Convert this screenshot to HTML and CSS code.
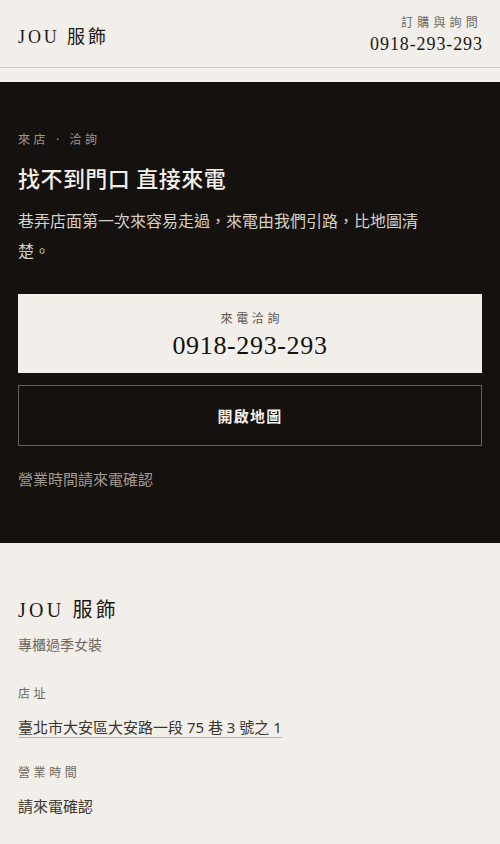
FILE: index.html
```html
<!DOCTYPE html>
<html lang="zh-Hant">
<head>
<meta charset="utf-8">
<title>JOU 服飾</title>
<link rel="stylesheet" href="styles.css">
</head>
<body>
<header class="topbar">
  <div class="brand">JOU 服飾</div>
  <div class="contact">
    <div class="contact-label">訂購與詢問</div>
    <div class="contact-phone">0918-293-293</div>
  </div>
</header>

<section class="visit">
  <div class="eyebrow">來店 · 洽詢</div>
  <h1 class="visit-title">找不到門口 直接來電</h1>
  <p class="visit-text">巷弄店面第一次來容易走過，來電由我們引路，比地圖清楚。</p>
  <a class="call-card" href="#">
    <span class="call-label">來電洽詢</span>
    <span class="call-phone">0918-293-293</span>
  </a>
  <a class="map-btn" href="#">開啟地圖</a>
  <p class="visit-hours">營業時間請來電確認</p>
</section>

<footer class="info">
  <div class="info-brand">JOU 服飾</div>
  <div class="info-sub">專櫃過季女裝</div>
  <div class="info-label">店址</div>
  <div class="info-value"><a class="address" href="#">臺北市大安區大安路一段 75 巷 3 號之 1</a></div>
  <div class="info-label">營業時間</div>
  <div class="info-value">請來電確認</div>
</footer>
</body>
</html>
```

FILE: styles.css
```css
* { box-sizing: border-box; }
html, body { margin: 0; padding: 0; }
body {
  background: #f2efea;
  color: #1c1915;
  font-family: "Noto Sans", "Noto Sans CJK TC", sans-serif;
}
a { color: inherit; text-decoration: none; }

.topbar {
  height: 68px;
  display: flex;
  justify-content: space-between;
  align-items: center;
  padding: 0 18px;
  border-bottom: 1px solid #d3cdc2;
}
.brand {
  font-family: "Liberation Serif", "Noto Sans CJK TC", serif;
  font-size: 18px;
  letter-spacing: 0.16em;
  color: #1c1915;
  padding-top: 2px;
}
.contact {
  display: flex;
  flex-direction: column;
  align-items: flex-end;
  padding-top: 3px;
}
.contact-label {
  font-size: 12px;
  letter-spacing: 0.35em;
  color: #6d675e;
  line-height: 18px;
}
.contact-phone {
  font-family: "Liberation Serif", serif;
  font-size: 18px;
  letter-spacing: 0.05em;
  margin-right: -0.05em;
  line-height: 24px;
  color: #1c1915;
}

.visit {
  margin-top: 14px;
  background: #15110e;
  padding: 50px 18px 53px;
  display: flex;
  flex-direction: column;
}
.eyebrow {
  font-size: 12px;
  letter-spacing: 0.3em;
  color: #9d978d;
  line-height: 16px;
}
.visit-title {
  margin: 15px 0 0;
  font-size: 22px;
  font-weight: 500;
  color: #f2efea;
  line-height: 30px;
  letter-spacing: 0.02em;
}
.visit-text {
  margin: 13px 0 0;
  max-width: 26em;
  font-size: 16px;
  line-height: 30px;
  color: #d6d0c6;
}
.call-card {
  margin-top: 28px;
  height: 79px;
  padding-top: 7px;
  background: #f2efea;
  display: flex;
  flex-direction: column;
  align-items: center;
  justify-content: center;
}
.call-label {
  font-size: 12px;
  letter-spacing: 0.3em;
  margin-right: -0.3em;
  color: #5f594f;
  line-height: 16px;
}
.call-phone {
  font-family: "Liberation Serif", serif;
  font-size: 26px;
  letter-spacing: 0.025em;
  line-height: 34px;
  margin-top: 2px;
  color: #15110e;
}
.map-btn {
  margin-top: 12px;
  height: 61px;
  border: 1px solid #67625b;
  display: flex;
  align-items: center;
  justify-content: center;
  font-size: 15px;
  font-weight: 700;
  letter-spacing: 0.08em;
  color: #f2efea;
}
.visit-hours {
  margin: 22px 0 0;
  font-size: 15px;
  line-height: 22px;
  color: #a19b91;
}

.info {
  padding: 52px 18px 40px;
  display: flex;
  flex-direction: column;
  align-items: flex-start;
}
.info-brand {
  font-family: "Liberation Serif", "Noto Sans CJK TC", serif;
  font-size: 20px;
  letter-spacing: 0.16em;
  line-height: 30px;
  color: #1c1915;
}
.info-sub {
  margin-top: 10px;
  font-size: 14px;
  line-height: 20px;
  color: #6d675e;
  margin-bottom: 31px;
}
.info-label {
  font-size: 12px;
  letter-spacing: 0.3em;
  line-height: 16px;
  color: #6d675e;
}
.info-value {
  margin-top: 14px;
  font-size: 15px;
  line-height: 22px;
  color: #3a352f;
  margin-bottom: 27px;
}
.address {
  border-bottom: 1px solid #bdb6aa;
  padding-bottom: 0;
}
```
